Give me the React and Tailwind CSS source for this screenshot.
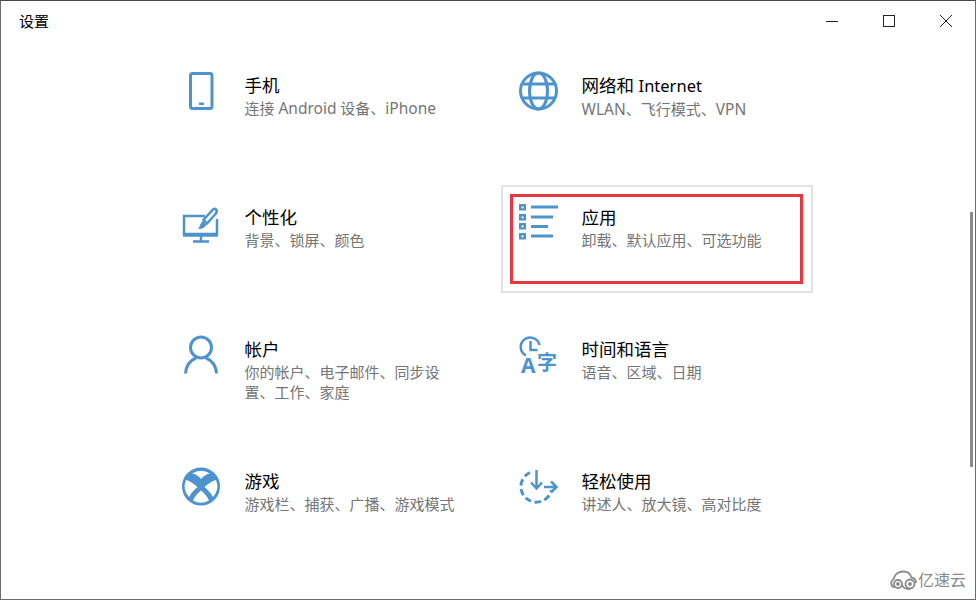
const C = "#4d93cd";
const FONT = { fontFamily: '"Noto Sans","Noto Sans CJK SC",sans-serif' };

function Icon({ x, y, children }) {
  return (
    <svg width="48" height="48" viewBox={`${x} ${y} 48 48`} fill="none" stroke={C} strokeWidth="3" className="shrink-0 mt-[15px] ml-[13px]">
      {children}
    </svg>
  );
}

const Phone = () => (
  <Icon x={178} y={68}>
    <rect x="190.5" y="73.5" width="21.5" height="35" rx="2" />
    <rect x="199" y="102.5" width="5" height="2.5" fill={C} stroke="none" />
  </Icon>
);
const Globe = () => (
  <Icon x={514} y={68}>
    <circle cx="538.5" cy="91" r="18" />
    <ellipse cx="538.5" cy="91" rx="9" ry="18" />
    <path d="M523 84H554M523 98H554" />
  </Icon>
);
const Brush = () => (
  <Icon x={178} y={200}>
    <path d="M205 216H184V234H217V219" strokeWidth="2.5" />
    <path d="M183 235H218" strokeWidth="3.5" />
    <path d="M201 236V241M193 241.5H209" strokeWidth="2.5" />
    <path d="M216 209.5c1.5 1.5 1 3-1 5l-8 9-3.5-3.5 8-9c2-2 3-3 4.500-1.500z" strokeWidth="2.500" fill="#fff" />
    <path d="M203 221l3.500 3.500c-1.500 3-4 4.500-8.500 4.500 2-2 1.500-5 5-8z" fill={C} stroke="none" />
  </Icon>
);
const ListIcon = () => (
  <Icon x={514} y={200}>
    {[204, 214, 223, 233].map((t) => (
      <g key={t}>
        <rect x="519" y={t} width="7" height="6.500" fill={C} stroke="none" />
        <rect x="521.500" y={t + 2.5} width="2" height="1.800" fill="#fff" stroke="none" />
      </g>
    ))}
    <path d="M531 207H558M531 217H553M531 226.500H548M531 236H553" />
  </Icon>
);
const Person = () => (
  <Icon x={178} y={332}>
    <circle cx="201" cy="347.500" r="10.500" />
    <path d="M185.500 373.500C186 366 190 360.500 196 358M206 358C212 360.500 216 366 216.500 373.500" />
  </Icon>
);
const Lang = () => (
  <Icon x={514} y={332}>
    <path d="M526 355.500A9.500 9.500 0 1 1 539.500 345" strokeWidth="2.500" />
    <path d="M530.500 341V350H537.500" strokeWidth="2.500" />
    <text x="521" y="373" fill={C} stroke="none" fontSize="21" fontWeight="700" fontFamily="Noto Sans">A</text>
    <text x="537" y="370" fill={C} stroke="none" fontSize="20" fontWeight="700" fontFamily="Noto Sans CJK SC">字</text>
  </Icon>
);
const Xbox = () => (
  <Icon x={178} y={464}>
    <circle cx="201" cy="486.500" r="17.500" fill={C} />
    <g fill="#fff" stroke="none">
      <path d="M192 473.500A16 16 0 0 1 210 473.500Q205 474 201 479Q197 474 192 473.500Z" />
      <path d="M186 480A16 16 0 0 0 189 497C191 493 194 490 197.500 487C194 484 190 481 186 480Z" />
      <path d="M216 480A16 16 0 0 1 213 497C211 493 208 490 204.500 487C208 484 212 481 216 480Z" />
      <path d="M193 500.500A16 16 0 0 0 209 500.500C207 496 204 493 201 490.500C198 493 195 496 193 500.500Z" />
    </g>
  </Icon>
);
const Ease = () => (
  <Icon x={514} y={464}>
    <path d="M530 472.500A15.500 15.500 0 1 0 551.500 490" strokeDasharray="6.500 3.500" />
    <path d="M536.500 470V488M531 482.500L536.500 488.500L542 482.500" strokeWidth="2.500" />
    <path d="M544 487H556M551 481.500L556.500 487L551 492.500" strokeWidth="2.500" />
  </Icon>
);

const L = ({ children }) => <span className="text-[15.500px]">{children}</span>;

const tiles = [
  [Phone, "手机", <>连接 <L>Android</L> 设备、<L>iPhone</L></>],
  [Globe, <>网络和 <span className="text-[16.500px]">Internet</span></>, <><L>WLAN</L>、飞行模式、<L>VPN</L></>],
  [Brush, "个性化", "背景、锁屏、颜色"],
  [ListIcon, "应用", "卸载、默认应用、可选功能", true],
  [Person, "帐户", <>你的帐户、电子邮件、同步设<br />置、工作、家庭</>],
  [Lang, "时间和语言", "语音、区域、日期"],
  [Xbox, "游戏", "游戏栏、捕获、广播、游戏模式"],
  [Ease, "轻松使用", "讲述人、放大镜、高对比度"],
];

export default function App() {
  return (
    <div style={FONT} className="relative w-[976px] h-[600px] overflow-hidden bg-white border border-[#6b6b6b] border-t-[#4a4a4a] box-border">
      <div className="flex h-[31px] items-start justify-between">
        <div className="ml-[18px] mt-[10px] text-[15px] leading-[21px] text-black">设置</div>
        <div className="flex mr-[23px] mt-[14px] gap-[45px]">
          <svg width="12" height="12" viewBox="0 0 12 12" stroke="#222" strokeWidth="1"><path d="M0 6.500H12" /></svg>
          <svg width="12" height="12" viewBox="0 0 12 12" fill="none" stroke="#222" strokeWidth="1"><rect x=".5" y=".5" width="11" height="11" /></svg>
          <svg width="12" height="12" viewBox="0 0 12 12" stroke="#222" strokeWidth="1"><path d="M0 0L12 12M12 0L0 12" /></svg>
        </div>
      </div>
      <div className="grid grid-cols-[312px_312px] gap-x-[24px] gap-y-[24px] ml-[164px] mt-[21px]">
        {tiles.map(([I, title, sub, focus], i) => (
          <div key={i} className={`flex h-[108px] w-[312px] ${focus ? "outline-2 -outline-offset-2 outline-[#e3e3e3]" : ""}`}>
            <I />
            <div className={`pt-[20px] w-[214px] ${i % 2 ? "ml-[19.500px]" : "ml-[18.500px]"}`}>
              <div className="text-[17.5px] leading-[24px] text-black">{title}</div>
              <div className="mt-[1px] text-[15px] leading-[20px] text-[#757575]">{sub}</div>
            </div>
          </div>
        ))}
      </div>
      <div className="absolute left-[509px] top-[193px] w-[293px] h-[90px] border-[3px] border-[#e6393f]" />
      <div className="absolute left-[969px] top-[211px] w-[3px] h-[255px] bg-[#8a8a8a]" />
      <div className="absolute right-[-1px] bottom-[-1px] w-[96px] h-[46px] bg-white flex items-center justify-end pr-[10px] pt-[5px] gap-[1px] text-[#8a8a8a]">
        <svg width="27" height="20" viewBox="0 0 27 20" fill="none" stroke="#8a8a8a" strokeWidth="1.800">
          <path d="M4.500 17.500a4.500 4.500 0 0 1-1-8.300C4.500 4.500 8.500 1.500 13.500 1.500c4 0 7 2.500 8 6 3 .5 4.500 3 4.500 5.500" />
          <circle cx="8" cy="14" r="4" />
          <circle cx="20" cy="14" r="4.500" />
          <path d="M12 15c2 4 4 4 8 4" />
          <circle cx="8" cy="14" r="1" />
          <circle cx="20" cy="14" r="1" />
        </svg>
        <span className="text-[16px] leading-[20px]">亿速云</span>
      </div>
    </div>
  );
}
